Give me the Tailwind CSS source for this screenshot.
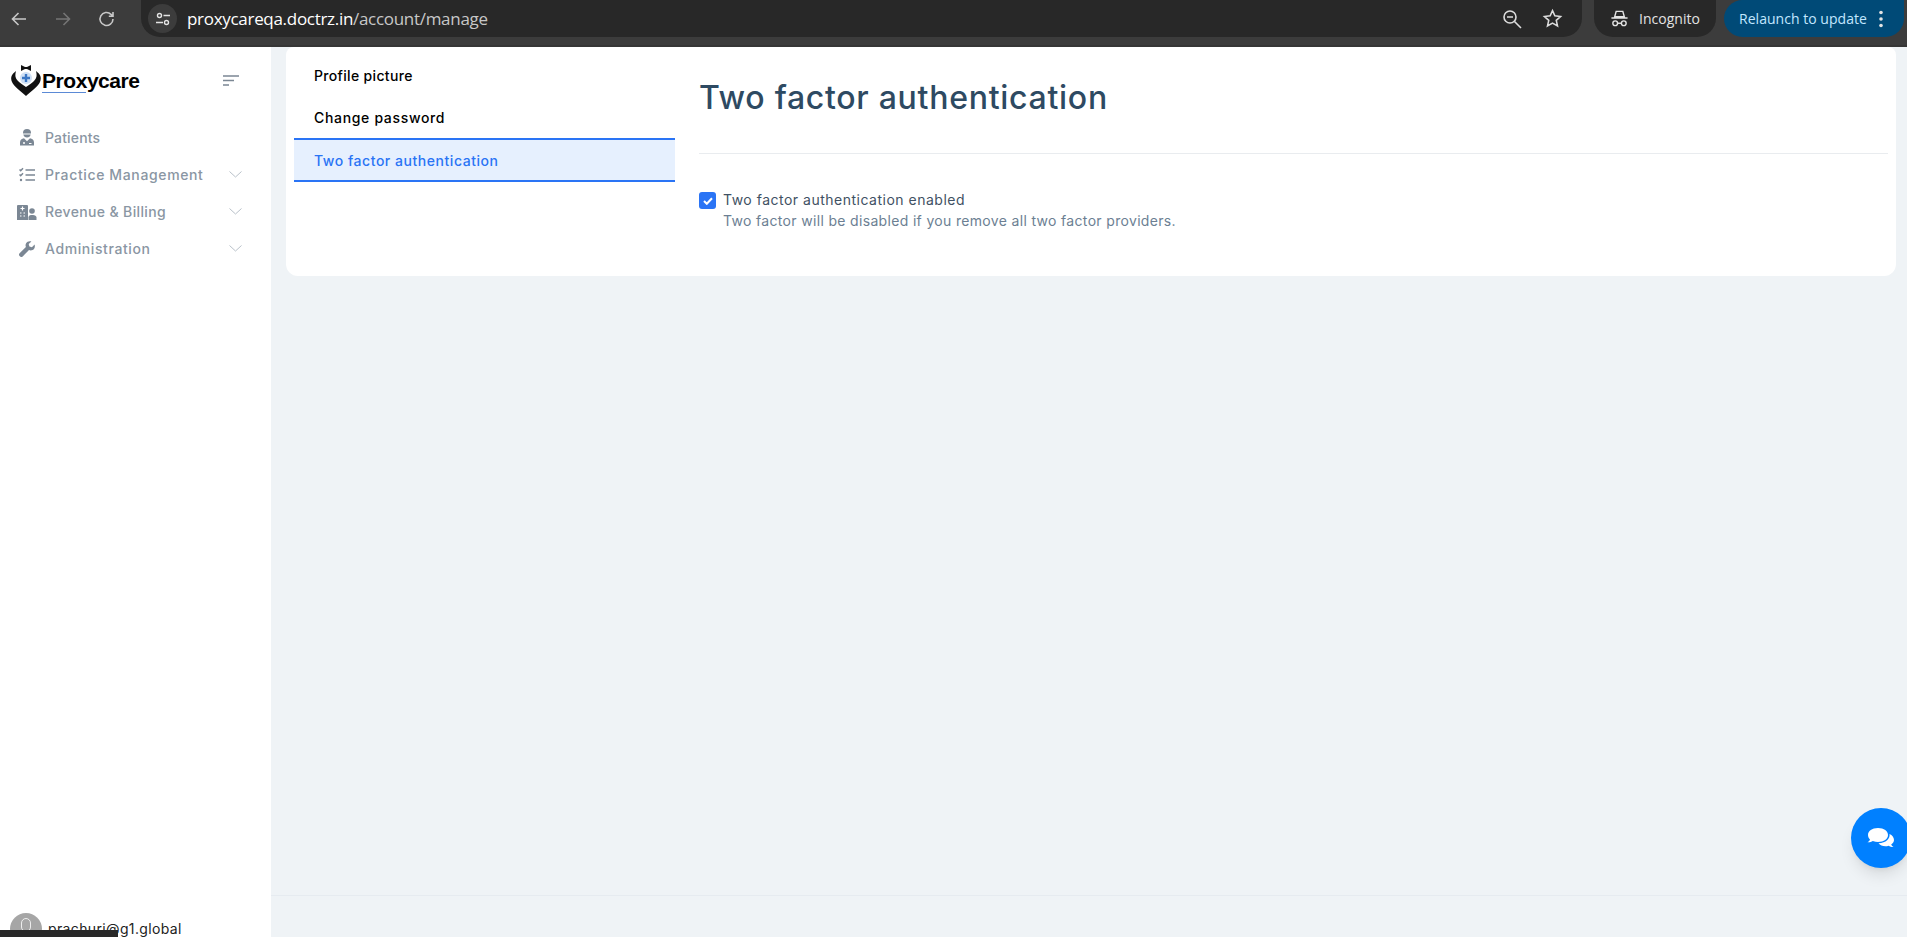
<!DOCTYPE html>
<html lang="en">
<head>
    <meta charset="UTF-8">
    <meta name="viewport" content="width=device-width, initial-scale=1.0">
    <title>Proxycare - Two factor authentication</title>
    <script src="https://cdn.jsdelivr.net/npm/@tailwindcss/browser@4"></script>
</head>
<body class="bg-[#eff3f6] font-['Inter',sans-serif] h-screen overflow-hidden relative">
    <!-- browser toolbar -->
    <header class="h-[47px] bg-[#3c3c3c] flex items-start border-b-2 border-[#363636] font-['Open_Sans',sans-serif]">
        <div class="w-[141px] h-[37px] flex items-center pl-[9px] gap-[24px] shrink-0">
            <svg class="w-[20px] h-[20px]" viewBox="0 0 20 20" fill="none" stroke="#c7c7c7" stroke-width="1.6"><path d="M17 10H3.500M9.500 4l-6 6 6 6"/></svg>
            <svg class="w-[20px] h-[20px]" viewBox="0 0 20 20" fill="none" stroke="#757575" stroke-width="1.6"><path d="M3 10h13.500M10.500 4l6 6-6 6"/></svg>
            <svg class="w-[20px] h-[20px]" viewBox="0 0 20 20" fill="none" stroke="#c7c7c7" stroke-width="1.6"><path d="M16 10a6.500 6.500 0 1 1-2-4.700L16 7.200M16 3v4.200h-4.200"/></svg>
        </div>
        <div class="w-[1441px] h-[37px] bg-[#282828] rounded-bl-[19px] rounded-br-[19px] flex items-center shrink-0 pl-[7px] pr-[19px]">
            <span class="w-[29px] h-[29px] rounded-full bg-[#3c3c3c] flex items-center justify-center">
                <svg class="w-[16px] h-[16px]" viewBox="0 0 16 16" fill="none" stroke="#e3e3e3" stroke-width="1.4"><circle cx="4.500" cy="4.500" r="2"/><path d="M8.500 4.500H15M1 11.500h7"/><circle cx="11.500" cy="11.500" r="2"/></svg>
            </span>
            <span class="ml-[10px] text-[17px] tracking-[-0.3px] text-white">proxycareqa.doctrz.in<span class="text-[#c7c7c7]">/account/manage</span></span>
            <div class="ml-auto flex items-center gap-[19px]">
                <svg class="w-[22px] h-[22px]" viewBox="0 0 22 22" fill="none" stroke="#dcdcdc" stroke-width="1.6"><circle cx="9" cy="9" r="6"/><path d="M13.500 13.500L20 20M6 9h6"/></svg>
                <svg class="w-[21px] h-[21px]" viewBox="0 0 24 24" fill="none" stroke="#dcdcdc" stroke-width="1.8"><path d="M12 3l2.700 6 6.500.7-4.900 4.400 1.400 6.400L12 17.200 6.300 20.500l1.400-6.400L2.800 9.700 9.300 9z"/></svg>
            </div>
        </div>
        <div class="ml-[12px] w-[122px] h-[37px] bg-[#282828] rounded-b-[19px] flex items-center justify-center gap-[10px] text-[14px] text-[#e3e3e3] shrink-0">
            <svg class="w-[19px] h-[19px]" viewBox="0 0 20 20" fill="none" stroke="#e3e3e3" stroke-width="1.5"><path d="M6.500 2.500h7l1.500 5.500H5zM1.500 9.500h17"/><circle cx="5.500" cy="15" r="2.500"/><circle cx="14.500" cy="15" r="2.500"/><path d="M8 15h4"/></svg>
            <span>Incognito</span>
        </div>
        <div class="ml-[8px] w-[180px] h-[37px] bg-[#004a77] rounded-b-[19px] rounded-l-[19px] flex items-center pl-[15px] text-[14px] tracking-[0.03px] text-[#c2e7ff] shrink-0">
            <span>Relaunch to update</span>
            <svg class="w-[4px] h-[18px] ml-[12px]" viewBox="0 0 4 18" fill="#e3e3e3"><circle cx="2" cy="2.500" r="1.800"/><circle cx="2" cy="9" r="1.800"/><circle cx="2" cy="15.500" r="1.800"/></svg>
        </div>
    </header>

    <div class="flex h-[890px]">
        <!-- sidebar -->
        <aside class="w-[271px] bg-white shrink-0 flex flex-col relative">
            <div class="h-[66px] flex items-center pl-[10px] pr-[32px] justify-between">
                <div class="flex items-center">
                    <svg class="w-[32px] h-[34px]" viewBox="0 0 32 34">
                        <path d="M11 2l4 2h2l4-2v6l-4-2h-2l-4 2z" fill="#111"/>
                        <path d="M6 8C2 11 0 14 2 19c2 5 9 9 14 14 5-5 12-9 14-14 2-5 0-8-4-11 1 4 1 7-2 10-2 2-5 4-8 6-3-2-6-4-8-6-3-3-3-6-2-10z" fill="#111"/>
                        <circle cx="16" cy="15" r="6" fill="#cfe0f5"/>
                        <path d="M16 11v8M12 15h8" stroke="#3a76c4" stroke-width="2.400"/>
                    </svg>
                    <span class="relative text-[21px] font-semibold tracking-[-0.45px] text-black font-['Liberation_Sans',sans-serif] leading-none">Proxycare<span class="absolute left-0 bottom-[-2px] w-[44px] h-[1px] bg-[#5b8ad6]"></span></span>
                </div>
                <svg class="w-[16px] h-[11px] mt-[1px]" viewBox="0 0 16 11" fill="none" stroke="#7b8794" stroke-width="1.400"><path d="M0 1h16M0 5.500h11M0 10h6"/></svg>
            </div>
            <nav class="pt-[6px] text-[14px] font-medium text-[#8a96a3]">
                <a class="h-[37px] flex items-center pl-[19px] pr-[29px] tracking-[0.15px]">
                    <svg class="w-[16px] h-[17px] mr-[10px]" viewBox="0 0 16 17" fill="#7b8794"><path d="M4 4a4 4 0 0 1 8 0v.500H4z"/><path d="M4.300 5.500h7.400A3.800 3.800 0 0 1 4.300 5.500z"/><path d="M1 16.500v-3c0-2.500 1.800-4 4-4.200l3 3 3-3c2.200.2 4 1.700 4 4.200v3z"/><circle cx="5" cy="14" r="1" fill="#fff"/><path d="M10 14.500h2.500" stroke="#fff" stroke-width="1"/></svg>
                    <span>Patients</span>
                </a>
                <a class="h-[37px] flex items-center pl-[19px] pr-[29px] tracking-[0.63px]">
                    <svg class="w-[16px] h-[16px] mr-[10px]" viewBox="0 0 16 16" fill="none" stroke="#7b8794" stroke-width="1.500"><path d="M0.500 2.500l1.200 1.200L4 1.200M0.500 7.500l1.200 1.200L4 6.200M6.500 3h9.500M6.500 8h9.500M6.500 13h9.500"/><circle cx="2" cy="13" r="1.200" fill="#7b8794" stroke="none"/></svg>
                    <span>Practice Management</span>
                    <svg class="ml-auto w-[13px] h-[7px]" viewBox="0 0 13 7" fill="none" stroke="#b9c1c9" stroke-width="1"><path d="M.5.500L6.500 6 12.500.5"/></svg>
                </a>
                <a class="h-[37px] flex items-center pl-[17px] pr-[29px] tracking-[0.36px]">
                    <svg class="w-[20px] h-[16px] mr-[8px]" viewBox="0 0 20 16"><path d="M0 2a1 1 0 0 1 1-1h9a1 1 0 0 1 1 1v14H0z" fill="#7b8794"/><path d="M5.500 2.500v4M3.500 4.500h4M3 9h1.500M6.500 9H8M3 12h1.500M6.500 12H8" stroke="#fff" stroke-width="1.200"/><circle cx="15" cy="7" r="2.800" fill="#7b8794"/><path d="M11.500 16v-2.500c0-1.500 1-2.500 2.500-2.500h2c1.800 0 3.500 1 3.500 2.500V16z" fill="#7b8794"/></svg>
                    <span>Revenue &amp; Billing</span>
                    <svg class="ml-auto w-[13px] h-[7px]" viewBox="0 0 13 7" fill="none" stroke="#b9c1c9" stroke-width="1"><path d="M.5.500L6.500 6 12.500.5"/></svg>
                </a>
                <a class="h-[37px] flex items-center pl-[19px] pr-[29px] tracking-[0.6px]">
                    <svg class="w-[16px] h-[16px] mr-[10px]" viewBox="0 0 16 16" fill="#7b8794"><path d="M15.600 3.600l-2.700 2.700-2.500-.7-.7-2.500L12.400.4C10.300-.3 8 .5 7 2.400c-.6 1.200-.6 2.500-.1 3.600L.6 12.300a1.800 1.800 0 0 0 0 2.600l.5.500a1.800 1.800 0 0 0 2.600 0L10 9.100c1.100.5 2.400.5 3.600-.1 1.900-1 2.700-3.300 2-5.400z"/></svg>
                    <span>Administration</span>
                    <svg class="ml-auto w-[13px] h-[7px]" viewBox="0 0 13 7" fill="none" stroke="#b9c1c9" stroke-width="1"><path d="M.5.500L6.500 6 12.500.5"/></svg>
                </a>
            </nav>
            <div class="mt-auto h-[24px] overflow-hidden pl-[10px] flex items-start gap-[6px] text-[14px] leading-[20px] tracking-[0.36px] text-[#222]">
                <span class="w-[32px] h-[32px] rounded-full bg-[#a6a6a6] flex justify-center pt-[5px] shrink-0">
                    <span class="w-[10px] h-[14px] rounded-full border border-white/80"></span>
                </span>
                <span class="mt-[6px]">prachuri@g1.global</span>
            </div>
            <div class="absolute left-0 bottom-0 w-[118px] h-[7px] bg-[#282828]"></div>
        </aside>

        <!-- page content -->
        <main class="flex-1 flex flex-col min-w-0">
            <div class="ml-[15px] mr-[11px] h-[229px] bg-white rounded-b-[12px] rounded-t-[8px] flex pl-[8px]">
                <ul class="w-[381px] shrink-0 pt-[8px] text-[14px] font-medium text-black">
                    <li class="h-[41px] flex items-center pl-[20px] tracking-[0.33px]">Profile picture</li>
                    <li class="h-[42px] flex items-center pl-[20px] tracking-[0.67px]">Change password</li>
                    <li class="h-[44px] flex items-center pl-[20px] tracking-[0.54px] bg-[#e6f0fe] text-[#2a74f5] border-y-2 border-[#2a74f5]">Two factor authentication</li>
                </ul>
                <section class="flex-1 ml-[24px] mr-[8px]">
                    <h1 class="h-[107px] border-b border-[#e9ecef] pt-[30px] text-[32px] leading-[42px] font-medium tracking-[0.72px] text-[#2e4a62]">Two factor authentication</h1>
                    <div class="mt-[35px] flex gap-[7px]">
                        <span class="w-[17px] h-[17px] mt-[3px] rounded-[3px] bg-[#2a74f5] flex items-center justify-center shrink-0">
                            <svg class="w-[10px] h-[8px]" viewBox="0 0 10 8" fill="none" stroke="#fff" stroke-width="2"><path d="M1 4l2.800 2.800L9 1.200"/></svg>
                        </span>
                        <div class="text-[14px] leading-[21px]">
                            <p class="text-[#3f5163] tracking-[0.5px]">Two factor authentication enabled</p>
                            <p class="text-[#6c7f93] tracking-[0.33px]">Two factor will be disabled if you remove all two factor providers.</p>
                        </div>
                    </div>
                </section>
            </div>
            <footer class="mt-auto h-[42px] border-t border-[#e6ebf0]"></footer>
        </main>
    </div>

    <!-- chat launcher -->
    <button class="absolute left-[1851px] top-[808px] w-[60px] h-[60px] rounded-full bg-[#0080ff] shadow-lg flex items-center justify-center pr-[2px]">
        <svg class="w-[27px] h-[21px]" viewBox="0 0 27 21" fill="#fff"><path d="M11 0C5 0 1 3 1 7c0 1.800.8 3.300 2 4.500-.5 1.300-1.500 2.300-2.500 2.800 2 .2 4-.5 5.300-1.300 1.900.7 3.500 1 5.200 1 6 0 10-3 10-7s-4-7-10-7z"/><path d="M22.500 6c.8 4.500-3.500 9-11 9.300 1.500 2 4 3 7 3 1 0 2-.1 3-.5 1.300.8 3 1.200 5 1.200-1-.5-1.800-1.500-2.300-2.500 1.700-1.200 2.800-2.800 2.800-4.500 0-2.600-1.700-4.800-4.500-6z"/></svg>
    </button>
</body>
</html>
